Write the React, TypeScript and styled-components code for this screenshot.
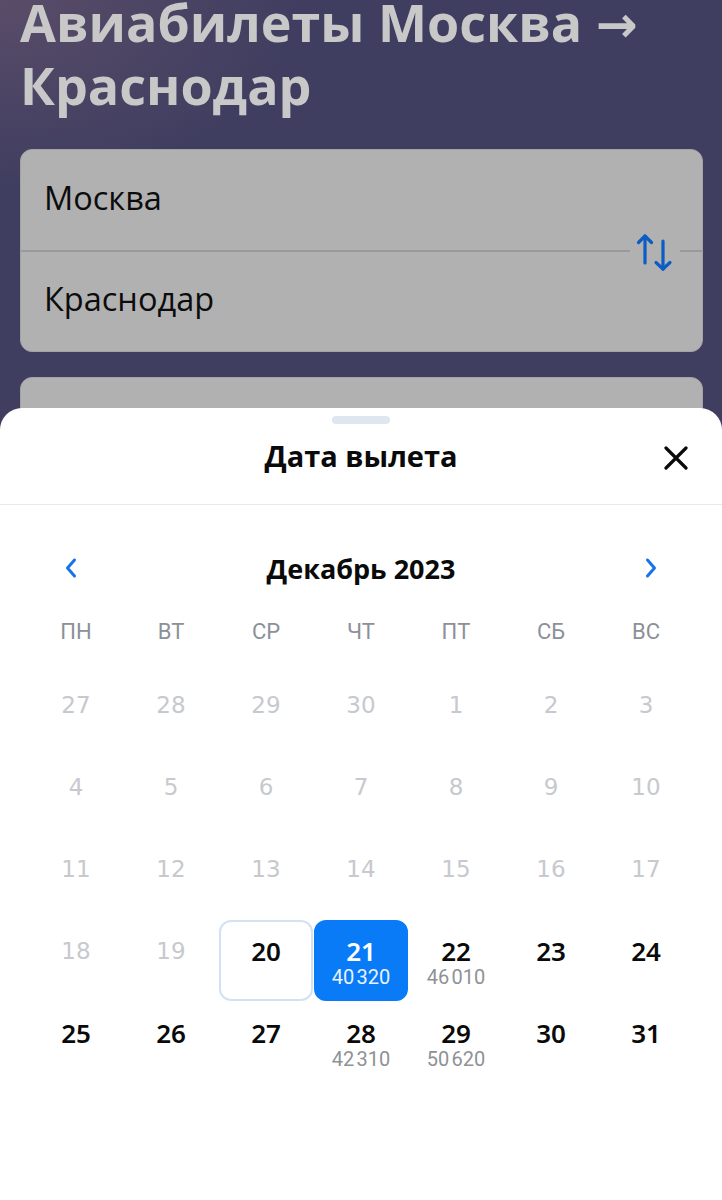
import styled, { createGlobalStyle, css } from "styled-components";

const GlobalStyle = createGlobalStyle`
  html, body {
    margin: 0;
    padding: 0;
    background: #3f3d5f;
  }
  * {
    box-sizing: border-box;
  }
`;

const Screen = styled.div`
  position: relative;
  width: 722px;
  height: 1200px;
  overflow: hidden;
  font-family: "Open Sans", "Noto Sans", sans-serif;
  background:
    radial-gradient(ellipse 420px 260px at 0% 0%, rgba(110, 88, 112, 0.55), transparent 70%),
    radial-gradient(ellipse 380px 300px at 100% 85%, rgba(100, 74, 96, 0.55), transparent 70%),
    radial-gradient(ellipse 300px 200px at 0% 70%, rgba(52, 54, 104, 0.6), transparent 70%),
    #403e60;
`;

const Backdrop = styled.div`
  display: flex;
  flex-direction: column;
  padding: 0 19px 0 20px;
`;

const PageTitle = styled.h1`
  margin: -10px 0 0;
  font-size: 52px;
  line-height: 63px;
  font-weight: 700;
  color: #c8c8c8;
  letter-spacing: 0;
`;

const TitleArrow = styled.span`
  font-family: "DejaVu Sans", sans-serif;
  font-weight: 700;
  font-size: 50px;
  line-height: 0;
`;

const RouteCard = styled.div`
  position: relative;
  margin-top: 33px;
  height: 203px;
  display: flex;
  flex-direction: column;
  background: #b1b1b1;
  border: 1px solid #a3a3a6;
  border-radius: 12px;
`;

const CityField = styled.div<{ $divided?: boolean }>`
  flex: 1;
  display: flex;
  align-items: center;
  padding: 0 0 5px 23px;
  font-size: 32.5px;
  color: #0c0c0c;
  ${(p) =>
    p.$divided &&
    css`
      border-bottom: 2px solid #9a9a9c;
    `}
`;

const SwapButton = styled.div`
  position: absolute;
  right: 22px;
  top: 82px;
  width: 50px;
  height: 40px;
  display: flex;
  align-items: center;
  justify-content: center;
  background: #b1b1b1;
`;

const DateCard = styled.div`
  margin-top: 25px;
  height: 140px;
  background: #b1b1b1;
  border: 1px solid #a3a3a6;
  border-radius: 12px;
`;

const Sheet = styled.section`
  position: absolute;
  top: 408px;
  left: 0;
  right: 0;
  bottom: 0;
  display: flex;
  flex-direction: column;
  background: #ffffff;
  border-radius: 22px 22px 0 0;
  padding-top: 8px;
`;

const Handle = styled.div`
  align-self: center;
  width: 58px;
  height: 8px;
  border-radius: 4px;
  background: #dfe6ef;
`;

const SheetHeader = styled.header`
  position: relative;
  display: flex;
  align-items: center;
  justify-content: center;
  padding: 12px 0 28px;
  border-bottom: 1px solid #e7e8ea;
`;

const SheetTitle = styled.h2`
  margin: 0;
  font-size: 29px;
  line-height: 40px;
  font-weight: 700;
  color: #0a0a0a;
`;

const CloseButton = styled.button`
  position: absolute;
  right: 30px;
  top: 18px;
  width: 32px;
  height: 32px;
  padding: 0;
  border: 0;
  background: none;
  display: flex;
  align-items: center;
  justify-content: center;
`;

const MonthNav = styled.div`
  display: flex;
  align-items: center;
  justify-content: space-between;
  height: 40px;
  margin-top: 43px;
  padding: 0 56px 0 56px;
`;

const NavArrow = styled.button`
  width: 30px;
  height: 40px;
  padding: 0;
  border: 0;
  background: none;
  display: flex;
  align-items: center;
  justify-content: center;
`;

const MonthLabel = styled.div`
  font-size: 27px;
  font-weight: 700;
  color: #0a0a0a;
`;

const WeekRow = styled.div`
  display: grid;
  grid-template-columns: repeat(7, 1fr);
  column-gap: 1px;
  margin-top: 28px;
  padding: 0 29px;
  height: 30px;
  align-items: center;
`;

const WeekDay = styled.div`
  text-align: center;
  font-family: Roboto, "Noto Sans", sans-serif;
  font-size: 22px;
  color: #8b9099;
`;

const DaysGrid = styled.div`
  display: grid;
  grid-template-columns: repeat(7, 1fr);
  grid-auto-rows: 81px;
  gap: 1px;
  margin-top: 28px;
  padding: 0 29px;
`;

type Tone = "past" | "normal" | "range" | "active";

const DayCell = styled.div<{ $tone: Tone }>`
  display: flex;
  flex-direction: column;
  align-items: center;
  padding-top: 13px;
  border-radius: 12px;
  border: 2px solid transparent;
  ${(p) =>
    p.$tone === "range" &&
    css`
      border-color: #d3e2f3;
    `}
  ${(p) =>
    p.$tone === "active" &&
    css`
      background: #0a7bf6;
      border-color: #0a7bf6;
    `}
`;

const DayNumber = styled.span<{ $tone: Tone }>`
  font-family: "Noto Sans", "Open Sans", sans-serif;
  font-size: 26px;
  line-height: 32px;
  font-weight: 600;
  color: #0a0a0a;
  ${(p) =>
    p.$tone === "past" &&
    css`
      font-family: "DejaVu Sans", sans-serif;
      font-weight: 400;
      font-size: 23px;
      color: #c6c9ce;
    `}
  ${(p) =>
    p.$tone === "active" &&
    css`
      color: #ffffff;
    `}
`;

const Price = styled.span<{ $onBlue?: boolean }>`
  font-family: Roboto, "Noto Sans", sans-serif;
  font-size: 20px;
  line-height: 20px;
  letter-spacing: -0.2px;
  color: ${(p) => (p.$onBlue ? "#e9f2ff" : "#8e9196")};
`;

const SwapIcon = () => (
  <svg width="40" height="40" viewBox="0 0 40 40" fill="none">
    <g stroke="#0b5cc4" strokeWidth="3.2" strokeLinecap="round" strokeLinejoin="round">
      <path d="M10 31V4" />
      <path d="M3.5 10.5L10 4l6.5 6.5" />
      <path d="M28 9v28" />
      <path d="M21 30.5l7 6.5 7-6.5" />
    </g>
  </svg>
);

const CloseIcon = () => (
  <svg width="24" height="24" viewBox="0 0 24 24" fill="none">
    <path d="M2 2l20 20M22 2L2 22" stroke="#0a0a0a" strokeWidth="3.2" strokeLinecap="round" />
  </svg>
);

const Chevron = ({ dir }: { dir: "left" | "right" }) => (
  <svg width="14" height="22" viewBox="0 0 14 22" fill="none">
    <path
      d={dir === "left" ? "M10.5 3L3.5 11l7 8" : "M3.5 3l7 8-7 8"}
      stroke="#1a73e8"
      strokeWidth="3"
      strokeLinecap="round"
      strokeLinejoin="round"
    />
  </svg>
);

const weekDays = ["ПН", "ВТ", "СР", "ЧТ", "ПТ", "СБ", "ВС"];

type Day = { n: number; tone: Tone; price?: string };

const prices: Record<number, string> = {
  21: "40\u202F320",
  22: "46\u202F010",
  28: "42\u202F310",
  29: "50\u202F620",
};

const days: Day[] = [
  ...[27, 28, 29, 30].map((n) => ({ n, tone: "past" as Tone })),
  ...Array.from({ length: 31 }, (_, i) => {
    const n = i + 1;
    let tone: Tone = n < 20 ? "past" : "normal";
    if (n === 20) tone = "range";
    if (n === 21) tone = "active";
    return { n, tone, price: prices[n] };
  }),
];

export default function App() {
  return (
    <Screen>
      <GlobalStyle />
      <Backdrop>
        <PageTitle>
          Авиабилеты Москва <TitleArrow>→</TitleArrow>
          <br />
          Краснодар
        </PageTitle>
        <RouteCard>
          <CityField $divided>Москва</CityField>
          <CityField>Краснодар</CityField>
          <SwapButton>
            <SwapIcon />
          </SwapButton>
        </RouteCard>
        <DateCard />
      </Backdrop>

      <Sheet>
        <Handle />
        <SheetHeader>
          <SheetTitle>Дата вылета</SheetTitle>
          <CloseButton aria-label="Закрыть">
            <CloseIcon />
          </CloseButton>
        </SheetHeader>

        <MonthNav>
          <NavArrow aria-label="Предыдущий месяц">
            <Chevron dir="left" />
          </NavArrow>
          <MonthLabel>Декабрь 2023</MonthLabel>
          <NavArrow aria-label="Следующий месяц">
            <Chevron dir="right" />
          </NavArrow>
        </MonthNav>

        <WeekRow>
          {weekDays.map((d) => (
            <WeekDay key={d}>{d}</WeekDay>
          ))}
        </WeekRow>

        <DaysGrid>
          {days.map((d, i) => (
            <DayCell key={i} $tone={d.tone}>
              <DayNumber $tone={d.tone}>{d.n}</DayNumber>
              {d.price && <Price $onBlue={d.tone === "active"}>{d.price}</Price>}
            </DayCell>
          ))}
        </DaysGrid>
      </Sheet>
    </Screen>
  );
}
